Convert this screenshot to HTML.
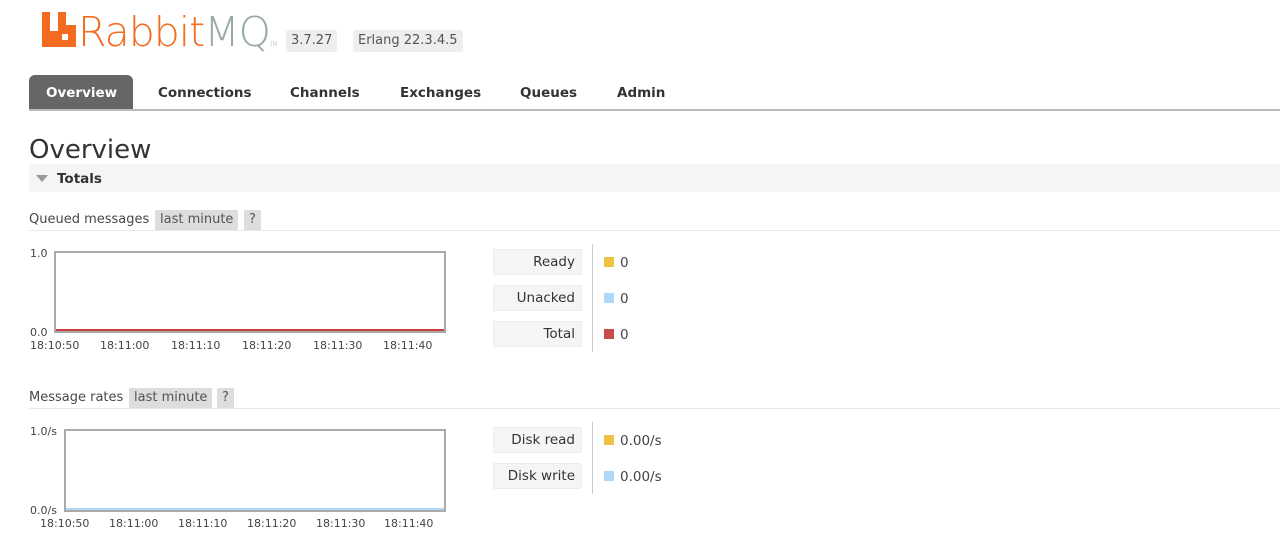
<!DOCTYPE html>
<html><head><meta charset="utf-8"><style>
*{margin:0;padding:0;box-sizing:border-box}
body{width:1280px;height:558px;background:#fff;font-family:"DejaVu Sans","Liberation Sans",sans-serif;color:#484848;position:relative;overflow:hidden;font-size:13px}
.a{position:absolute;white-space:nowrap}
.ver{background:#eee;border-radius:3px;font-size:13px;color:#555;padding:0 5px;height:22px;line-height:22px}
.tab{font-weight:bold;font-size:13.5px;color:#333;top:85px}
.tag{background:#ddd;height:20px;line-height:20px;padding:0 5px;font-size:13px;color:#555}
.box{border:2px solid #aaa;background:#fff}
.ax{font-size:11px;color:#444}
.lg{background:#f5f5f5;border:1px solid #ececec;border-radius:2px;width:89px;height:26px;line-height:25px;text-align:right;padding-right:6px;font-size:13.5px;color:#333}
.sq{width:10px;height:10px}
.v{font-size:13.5px;color:#444}
</style></head><body>
<svg class="a" style="left:42px;top:12px" width="34" height="35" viewBox="0 0 34 35"><path d="M0 0h8v19h8V0h8v13h10v22H0z" fill="#f26b21"/><rect x="20" y="22" width="6" height="6" fill="#fff"/></svg>
<div class="a" style="left:78px;top:8px;font-size:41px;color:#f26b21;font-family:'DejaVu Sans',sans-serif;font-weight:300;letter-spacing:-1px;line-height:48px">Rabbit<span style="color:#99aaa5">MQ</span><span style="font-size:6px;color:#99aaa5">TM</span></div>
<div class="a ver" style="left:286px;top:30px">3.7.27</div>
<div class="a ver" style="left:353px;top:30px">Erlang 22.3.4.5</div>
<div class="a" style="left:29px;top:75px;width:104px;height:35px;background:#666;border-radius:6px 6px 0 0"></div>
<div class="a tab" style="left:46px;color:#fff">Overview</div>
<div class="a tab" style="left:158px">Connections</div>
<div class="a tab" style="left:290px">Channels</div>
<div class="a tab" style="left:400px">Exchanges</div>
<div class="a tab" style="left:520px">Queues</div>
<div class="a tab" style="left:617px">Admin</div>
<div class="a" style="left:29px;top:109px;width:1251px;height:2px;background:#bbb"></div>
<div class="a" style="left:29px;top:135px;font-size:26px;color:#333">Overview</div>
<div class="a" style="left:29px;top:164px;width:1251px;height:28px;background:#f5f5f5"></div>
<div class="a" style="left:36px;top:175px;width:0;height:0;border-left:6px solid transparent;border-right:6px solid transparent;border-top:7px solid #999"></div>
<div class="a" style="left:57px;top:171px;font-weight:bold;font-size:13.5px;color:#333">Totals</div>

<div class="a" style="left:29px;top:212px">Queued messages</div>
<div class="a tag" style="left:155px;top:210px">last minute</div>
<div class="a tag" style="left:244px;top:210px">?</div>
<div class="a" style="left:29px;top:230px;width:1251px;height:1px;background:#e8e8e8"></div>
<div class="a box" style="left:54px;top:251px;width:392px;height:82px"><div style="position:absolute;left:0;right:0;bottom:0;height:2px;background:#cc3c3c"></div></div>
<div class="a ax" style="left:30px;top:247px">1.0</div>
<div class="a ax" style="left:30px;top:326px">0.0</div>
<div class="a ax" style="left:30px;top:339px">18:10:50</div>
<div class="a ax" style="left:100px;top:339px">18:11:00</div>
<div class="a ax" style="left:171px;top:339px">18:11:10</div>
<div class="a ax" style="left:242px;top:339px">18:11:20</div>
<div class="a ax" style="left:313px;top:339px">18:11:30</div>
<div class="a ax" style="left:383px;top:339px">18:11:40</div>
<div class="a lg" style="left:493px;top:249px">Ready</div>
<div class="a lg" style="left:493px;top:285px">Unacked</div>
<div class="a lg" style="left:493px;top:321px">Total</div>
<div class="a" style="left:592px;top:244px;width:1px;height:108px;background:#ccc"></div>
<div class="a sq" style="left:604px;top:257px;background:#edc240"></div>
<div class="a sq" style="left:604px;top:293px;background:#afd8f8"></div>
<div class="a sq" style="left:604px;top:329px;background:#cb4b4b"></div>
<div class="a v" style="left:620px;top:255px">0</div>
<div class="a v" style="left:620px;top:291px">0</div>
<div class="a v" style="left:620px;top:327px">0</div>

<div class="a" style="left:29px;top:390px">Message rates</div>
<div class="a tag" style="left:129px;top:388px">last minute</div>
<div class="a tag" style="left:217px;top:388px">?</div>
<div class="a" style="left:29px;top:408px;width:1251px;height:1px;background:#e8e8e8"></div>
<div class="a box" style="left:64px;top:429px;width:382px;height:83px"><div style="position:absolute;left:0;right:0;bottom:0;height:2px;background:#afd8f8"></div></div>
<div class="a ax" style="left:30px;top:425px">1.0/s</div>
<div class="a ax" style="left:30px;top:504px">0.0/s</div>
<div class="a ax" style="left:40px;top:517px">18:10:50</div>
<div class="a ax" style="left:109px;top:517px">18:11:00</div>
<div class="a ax" style="left:178px;top:517px">18:11:10</div>
<div class="a ax" style="left:247px;top:517px">18:11:20</div>
<div class="a ax" style="left:316px;top:517px">18:11:30</div>
<div class="a ax" style="left:384px;top:517px">18:11:40</div>
<div class="a lg" style="left:493px;top:427px">Disk read</div>
<div class="a lg" style="left:493px;top:463px">Disk write</div>
<div class="a" style="left:592px;top:422px;width:1px;height:72px;background:#ccc"></div>
<div class="a sq" style="left:604px;top:435px;background:#edc240"></div>
<div class="a sq" style="left:604px;top:471px;background:#afd8f8"></div>
<div class="a v" style="left:620px;top:433px">0.00/s</div>
<div class="a v" style="left:620px;top:469px">0.00/s</div>
</body></html>
